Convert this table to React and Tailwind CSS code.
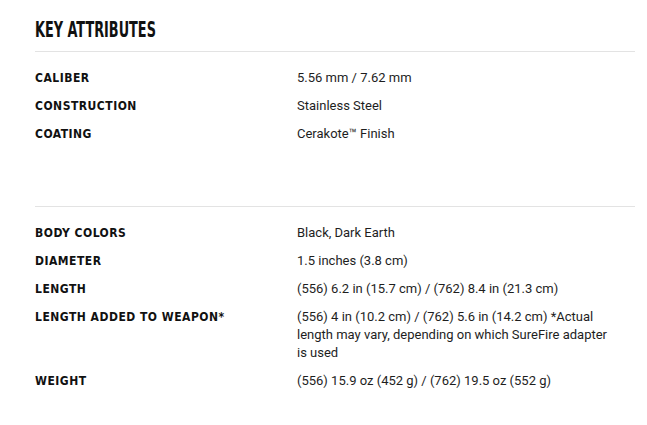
import React from "react";

const section1 = [
  ["CALIBER", "5.56 mm / 7.62 mm"],
  ["CONSTRUCTION", "Stainless Steel"],
  ["COATING", "Cerakote™ Finish"],
];

const section2 = [
  ["BODY COLORS", "Black, Dark Earth"],
  ["DIAMETER", "1.5 inches (3.8 cm)"],
  ["LENGTH", "(556) 6.2 in (15.7 cm) / (762) 8.4 in (21.3 cm)"],
  [
    "LENGTH ADDED TO WEAPON*",
    "(556) 4 in (10.2 cm) / (762) 5.6 in (14.2 cm) *Actual length may vary, depending on which SureFire adapter is used",
  ],
  ["WEIGHT", "(556) 15.9 oz (452 g) / (762) 19.5 oz (552 g)"],
];

function Rows({ rows }) {
  return (
    <div className="flex flex-col gap-[10px] pt-[17px]">
      {rows.map(([k, v]) => (
        <div key={k} className="flex">
          <div className="w-[262px] shrink-0 text-[12px] leading-[18px] font-bold tracking-[0.5px] font-stretch-condensed text-[#111111] [font-family:'DejaVu_Sans',sans-serif]">
            {k}
          </div>
          <div className="w-[314px] text-[13px] leading-[18px] text-[#1e1e1e] [font-family:Roboto,sans-serif]">
            {v}
          </div>
        </div>
      ))}
    </div>
  );
}

export default function App() {
  return (
    <div className="w-[647px] h-[425px] bg-white px-[35px] pt-[16px]">
      <div className="w-[600px]">
        <h2 className="h-[28px] origin-left scale-x-[0.68] whitespace-nowrap text-[21px] leading-[28px] font-bold font-stretch-condensed text-[#111111] [font-family:'DejaVu_Sans',sans-serif]">
          KEY ATTRIBUTES
        </h2>
        <div className="mt-[7px] border-t border-[#e3e3e3]" />
        <Rows rows={section1} />
        <div className="mt-[63px] border-t border-[#e3e3e3]" />
        <Rows rows={section2} />
      </div>
    </div>
  );
}
